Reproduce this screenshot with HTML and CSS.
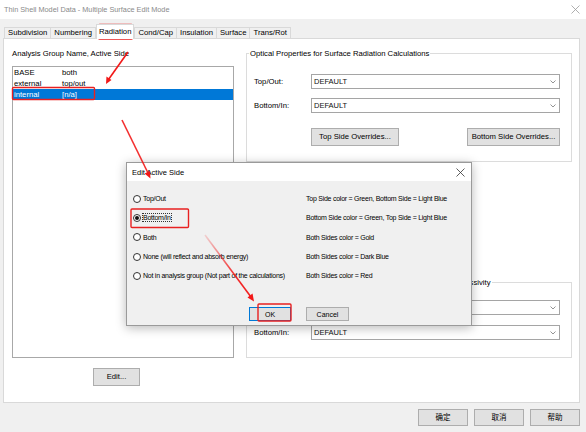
FILE: index.html
```html
<!DOCTYPE html>
<html>
<head>
<meta charset="utf-8">
<link rel="stylesheet" href="styles.css">
</head>
<body>
<div class="win">
  <div class="titlebar">
    <span>Thin Shell Model Data - Multiple Surface Edit Mode</span>
    <svg class="xbtn" width="9" height="9" viewBox="0 0 9 9"><path d="M0.5 0.5L8.5 8.5M8.5 0.5L0.5 8.5" stroke="#9a9a9a" stroke-width="0.8" fill="none"/></svg>
  </div>
  <div class="tabs">
    <div class="tab">Subdivision</div>
    <div class="tab">Numbering</div>
    <div class="tab sel">Radiation</div>
    <div class="tab">Cond/Cap</div>
    <div class="tab">Insulation</div>
    <div class="tab">Surface</div>
    <div class="tab">Trans/Rot</div>
  </div>
  <div class="panel">
    <div class="left">
      <div class="lbl">Analysis Group Name, Active Side</div>
      <div class="list">
        <div class="row"><span class="c1">BASE</span><span>both</span></div>
        <div class="row"><span class="c1">external</span><span>top/out</span></div>
        <div class="row selrow"><span class="c1">internal</span><span>[n/a]</span></div>
      </div>
      <div class="editrow"><button class="btn edit">Edit...</button></div>
    </div>
    <div class="right">
      <fieldset class="grp g1">
        <legend>Optical Properties for Surface Radiation Calculations</legend>
        <div class="frow r1"><span class="flbl">Top/Out:</span><div class="combo"><span>DEFAULT</span><svg width="6" height="4" viewBox="0 0 6 4"><path d="M0.5 0.5L3 3L5.5 0.5" stroke="#777" stroke-width="0.8" fill="none"/></svg></div></div>
        <div class="frow r2"><span class="flbl">Bottom/In:</span><div class="combo"><span>DEFAULT</span><svg width="6" height="4" viewBox="0 0 6 4"><path d="M0.5 0.5L3 3L5.5 0.5" stroke="#777" stroke-width="0.8" fill="none"/></svg></div></div>
        <div class="brow"><button class="btn ovr1">Top Side Overrides...</button><button class="btn ovr2">Bottom Side Overrides...</button></div>
      </fieldset>
      <fieldset class="grp g2">
        <legend>Optical Properties for Solar Radiation Calculations - Infrared Emissivity</legend>
        <div class="frow r3"><span class="flbl">Top/Out:</span><div class="combo"><span>DEFAULT</span><svg width="6" height="4" viewBox="0 0 6 4"><path d="M0.5 0.5L3 3L5.5 0.5" stroke="#777" stroke-width="0.8" fill="none"/></svg></div></div>
        <div class="frow r4"><span class="flbl">Bottom/In:</span><div class="combo"><span>DEFAULT</span><svg width="6" height="4" viewBox="0 0 6 4"><path d="M0.5 0.5L3 3L5.5 0.5" stroke="#777" stroke-width="0.8" fill="none"/></svg></div></div>
      </fieldset>
    </div>
  </div>
  <div class="footer">
    <button class="btn fbtn">确定</button>
    <button class="btn fbtn">取消</button>
    <button class="btn fbtn">帮助</button>
  </div>
</div>

<div class="dlg">
  <div class="dtitle">
    <span>Edit Active Side</span>
    <svg width="9" height="9" viewBox="0 0 9 9"><path d="M0.5 0.5L8.5 8.5M8.5 0.5L0.5 8.5" stroke="#333" stroke-width="0.8" fill="none"/></svg>
  </div>
  <div class="dbody">
    <div class="opts">
      <div class="opt"><span class="radio"></span><span class="otxt">Top/Out</span><span class="desc">Top Side color = Green, Bottom Side = Light Blue</span></div>
      <div class="opt"><span class="radio on"></span><span class="otxt focus">Bottom/In</span><span class="desc">Bottom Side color = Green, Top Side = Light Blue</span></div>
      <div class="opt"><span class="radio"></span><span class="otxt">Both</span><span class="desc">Both Sides color = Gold</span></div>
      <div class="opt"><span class="radio"></span><span class="otxt">None (will reflect and absorb energy)</span><span class="desc">Both Sides color = Dark Blue</span></div>
      <div class="opt"><span class="radio"></span><span class="otxt">Not in analysis group (Not part of the calculations)</span><span class="desc">Both Sides color = Red</span></div>
    </div>
    <div class="dbtns">
      <button class="btn dbtn ok">OK</button>
      <button class="btn dbtn cancel">Cancel</button>
    </div>
  </div>
</div>

<svg class="annot" width="586" height="432" viewBox="0 0 586 432">
  <defs>
    <linearGradient id="fade" gradientUnits="userSpaceOnUse" x1="205" y1="235" x2="254" y2="302">
      <stop offset="0" stop-color="#f21818" stop-opacity="0.15"/>
      <stop offset="0.6" stop-color="#f21818" stop-opacity="0.9"/>
      <stop offset="1" stop-color="#f21818" stop-opacity="1"/>
    </linearGradient>
  </defs>
  <rect x="98.5" y="24.5" width="34" height="14.5" rx="1" fill="none" stroke="#e82020" stroke-width="1.4"/>
  <rect x="12.5" y="87.5" width="82" height="12" rx="1" fill="none" stroke="#e82020" stroke-width="1.4"/>
  <rect x="131" y="209" width="57.5" height="18.5" rx="1" fill="none" stroke="#e82020" stroke-width="1.4"/>
  <rect x="258" y="304" width="33" height="17" rx="1" fill="none" stroke="#e82020" stroke-width="1.4"/>
  <line x1="128" y1="52" x2="108.5" y2="79.5" stroke="#f21818" stroke-width="1.6"/>
  <polygon points="106,84 106.5,76.5 111.5,80" fill="#f21818"/>
  <line x1="122" y1="120" x2="148" y2="173" stroke="#f21818" stroke-width="1.6" stroke-opacity="0.9"/>
  <polygon points="150.5,178.5 144.5,173.5 150,171" fill="#f21818"/>
  <line x1="205" y1="235" x2="251" y2="297" stroke="url(#fade)" stroke-width="1.6"/>
  <polygon points="254,301.5 247.5,297.5 252.5,293.5" fill="#f21818"/>
</svg>
</body>
</html>
```

FILE: styles.css
```css
* { box-sizing: border-box; }
html, body { margin: 0; padding: 0; }
body {
  width: 586px;
  height: 432px;
  overflow: hidden;
  background: #f0f0f0;
  font-family: "Liberation Sans", Arial, "Noto Sans CJK SC", sans-serif;
  font-size: 7.7px;
  color: #000;
  position: relative;
}
.btn {
  font-family: "Liberation Sans", Arial, "Noto Sans CJK SC", sans-serif;
  font-size: 7.7px;
  color: #000;
  background: #e1e1e1;
  border: 1px solid #adadad;
  padding: 0;
  margin: 0;
  line-height: 1;
}

/* title bar */
.titlebar {
  height: 19px;
  background: #fff;
  display: flex;
  align-items: center;
  justify-content: space-between;
  padding: 0 6px 0 4px;
  color: #8a8a8a;
  font-size: 7.3px;
}

/* tabs */
.tabs {
  display: flex;
  align-items: flex-end;
  height: 14px;
  margin-top: 5px;
  padding-left: 4px;
  position: relative;
  z-index: 1;
}
.tab {
  height: 11px;
  line-height: 10px;
  padding: 0 3px;
  border: 1px solid #d9d9d9;
  border-bottom: none;
  background: #f0f0f0;
  margin-right: -1px;
  white-space: nowrap;
}
.tab.sel {
  height: 15px;
  line-height: 13px;
  background: #fff;
  margin-bottom: -1px;
  margin-left: 1px;
  margin-right: 0;
  padding: 0 2px;
  position: relative;
  z-index: 2;
}

/* panel */
.panel {
  margin-left: 3px;
  width: 577px;
  height: 365px;
  background: #fff;
  border: 1px solid #d9d9d9;
  display: flex;
  gap: 12px;
  padding: 10px 0 0 8px;
}
.left {
  width: 222px;
  display: flex;
  flex-direction: column;
}
.lbl {
  height: 9px;
  line-height: 9px;
  white-space: nowrap;
}
.list {
  margin-top: 8px;
  height: 292px;
  border: 1px solid #a8a8a8;
  background: #fff;
}
.row {
  height: 11px;
  line-height: 11px;
  display: flex;
  padding-left: 1px;
}
.row .c1 { width: 48px; }
.selrow {
  background: #0078d7;
  color: #fff;
}
.editrow {
  margin-top: 10px;
  padding-left: 81px;
}
.edit {
  width: 47px;
  height: 18px;
}

/* right groupboxes */
.right {
  width: 326px;
  display: flex;
  flex-direction: column;
}
.grp {
  margin: 0;
  border: 1px solid #dcdcdc;
  padding: 0 0 0 7px;
  min-width: 0;
}
.grp legend {
  padding: 0 1px;
  margin-left: -5px;
  height: 9px;
  line-height: 9px;
  white-space: nowrap;
}
.g1 { height: 113px; }
.g2 { margin-top: 116px; height: 80px; }
.frow {
  display: flex;
  align-items: center;
  height: 15px;
}
.r1 { margin-top: 16px; }
.r2 { margin-top: 9px; }
.r3 { margin-top: 13px; }
.r4 { margin-top: 10px; }
.flbl { width: 57px; white-space: nowrap; }
.combo {
  width: 249px;
  height: 15px;
  border: 1px solid #a5a5a5;
  background: #fff;
  display: flex;
  align-items: center;
  justify-content: space-between;
  padding: 0 3px 0 2px;
  font-size: 7.5px;
  color: #111;
}
.brow {
  margin-top: 15px;
  margin-left: 57px;
  width: 249px;
  display: flex;
  justify-content: space-between;
}
.ovr1 { width: 88px; height: 18px; }
.ovr2 { width: 93px; height: 18px; }

/* footer */
.footer {
  margin-top: 6px;
  display: flex;
  justify-content: flex-end;
  gap: 6px;
  padding-right: 6px;
}
.fbtn {
  width: 50px;
  height: 17px;
  font-size: 7.5px;
}

/* dialog */
.dlg {
  position: absolute;
  left: 126px;
  top: 162px;
  width: 346px;
  height: 164px;
  background: #f0f0f0;
  border: 1px solid #9a9a9a;
  box-shadow: 0 2px 10px rgba(0, 0, 0, 0.28);
  font-size: 7px;
  letter-spacing: -0.25px;
  display: flex;
  flex-direction: column;
}
.dtitle {
  height: 18px;
  background: #fff;
  display: flex;
  align-items: center;
  justify-content: space-between;
  padding: 0 6px 0 5px;
  font-size: 7.5px;
  letter-spacing: 0;
}
.dbody {
  flex: 1;
  padding: 8px 0 0 6px;
}
.opt {
  height: 19.3px;
  display: flex;
  align-items: center;
  position: relative;
}
.radio {
  width: 8px;
  height: 8px;
  border: 1px solid #333;
  border-radius: 50%;
  background: #fff;
  margin-right: 2px;
  display: flex;
  align-items: center;
  justify-content: center;
  flex: none;
}
.radio.on::after {
  content: "";
  width: 4px;
  height: 4px;
  border-radius: 50%;
  background: #111;
}
.otxt {
  white-space: nowrap;
}
.otxt.focus {
  outline: 1px dotted #333;
  outline-offset: 0;
}
.desc {
  white-space: nowrap;
  position: absolute;
  left: 173px;
}
.dbtns {
  margin-top: 22px;
  padding-left: 116px;
  display: flex;
  gap: 15px;
}
.dbtn {
  height: 14px;
  font-size: 7px;
}
.ok { width: 42px; border-color: #0078d7; }
.cancel { width: 43px; }

/* annotations */
.annot {
  position: absolute;
  left: 0;
  top: 0;
  pointer-events: none;
}
```
